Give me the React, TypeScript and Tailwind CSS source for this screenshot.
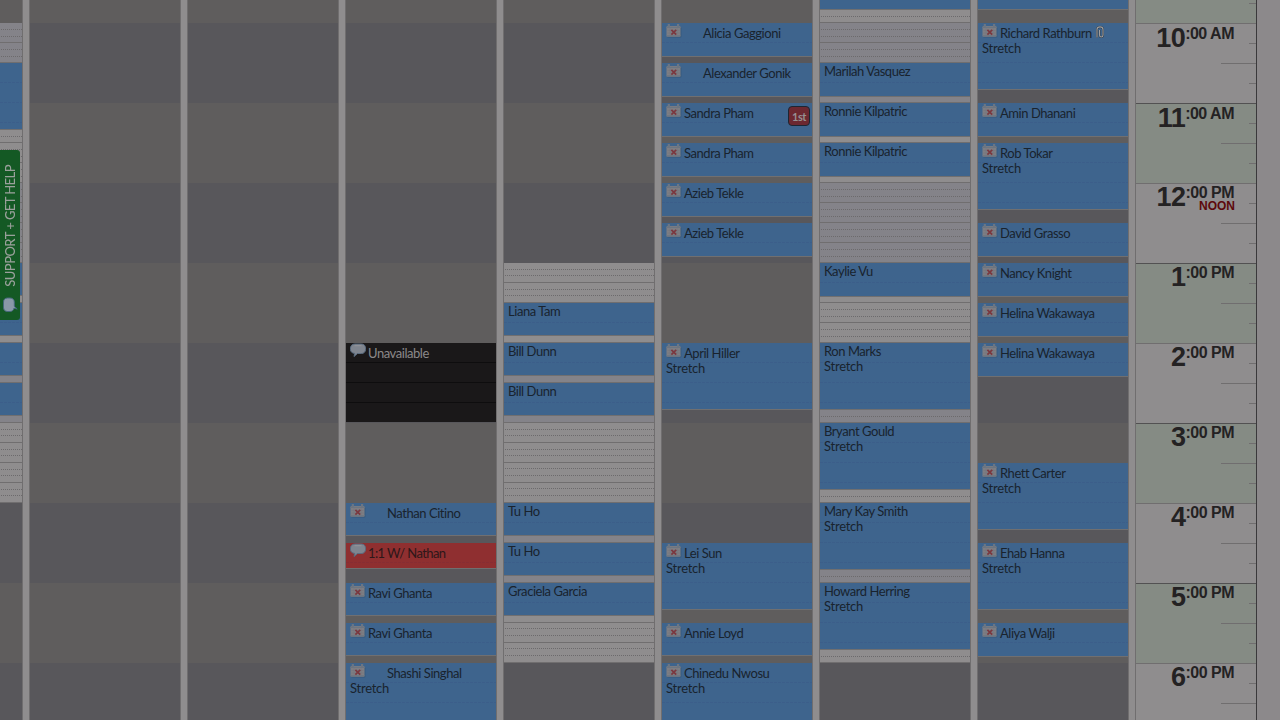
import React from 'react';

type Icon = 'cal' | 'chat';
type Item = {
  kind: 'event' | 'gap' | 'row' | 'busy' | 'red';
  h: number;
  name?: string;
  icon?: Icon;
  indent?: boolean;
  stretch?: boolean;
  badge?: boolean;
  clip?: boolean;
  solid?: boolean;
};

const ev = (h: number, name?: string, extra: Partial<Item> = {}): Item => ({ kind: 'event', h, name, ...extra });
const cal = (h: number, name: string, extra: Partial<Item> = {}): Item => ev(h, name, { icon: 'cal', ...extra });
const gap = (h: number): Item => ({ kind: 'gap', h });
const dot = (h: number): Item => ({ kind: 'row', h });
const line = (h: number): Item => ({ kind: 'row', h, solid: true });
const slotA = () => [dot(7), dot(6), line(7)];
const slotB = () => [dot(6), dot(7), line(7)];
const slotC = () => [dot(7), dot(7), line(6)];

const left: Item[] = [
  gap(23), ...slotC(), ...slotC(), ev(67),
  dot(7), line(6), ...slotC(), ...slotC(), ...slotC(), ...slotC(), ...slotC(), ...slotC(),
  ev(33), line(7), ev(33), line(7), ev(33), line(7), ev(33), line(7),
  ...slotA(), ...slotA(), ...slotA(), ...slotA(),
];

const columns: Item[][] = [
  [],
  [],
  [
    gap(343), { kind: 'busy', h: 79, name: 'Unavailable', icon: 'chat' }, gap(81),
    cal(33, 'Nathan Citino', { indent: true }), gap(7),
    { kind: 'red', h: 26, name: '1:1 W/ Nathan', icon: 'chat' }, gap(14),
    cal(33, 'Ravi Ghanta'), gap(7), cal(33, 'Ravi Ghanta'), gap(7),
    cal(67, 'Shashi Singhal', { indent: true, stretch: true }),
  ],
  [
    gap(263), ...slotA(), ...slotA(), ev(33, 'Liana Tam'), line(7),
    ev(33, 'Bill Dunn'), line(7), ev(33, 'Bill Dunn'), line(7),
    ...slotA(), ...slotA(), ...slotB(), ...slotB(),
    ev(33, 'Tu Ho'), line(7), ev(33, 'Tu Ho'), line(7), ev(33, 'Graciela Garcia'), line(7),
    ...slotB(), ...slotB(),
  ],
  [
    gap(23), cal(34, 'Alicia Gaggioni', { indent: true }), gap(6),
    cal(34, 'Alexander Gonik', { indent: true }), gap(6),
    cal(34, 'Sandra Pham', { badge: true }), gap(6), cal(34, 'Sandra Pham'), gap(6),
    cal(34, 'Azieb Tekle'), gap(6), cal(34, 'Azieb Tekle'), gap(86),
    cal(67, 'April Hiller', { stretch: true }), gap(133),
    cal(67, 'Lei Sun', { stretch: true }), gap(13), cal(33, 'Annie Loyd'), gap(7),
    cal(67, 'Chinedu Nwosu', { stretch: true }),
  ],
  [
    ev(10), dot(7), line(6), ...slotC(), ...slotC(),
    ev(34, 'Marilah Vasquez'), line(6), ev(34, 'Ronnie Kilpatric'), line(6), ev(34, 'Ronnie Kilpatric'), line(6),
    ...slotC(), ...slotC(), ...slotC(), ...slotC(),
    ev(34, 'Kaylie Vu'), line(6), ...slotC(), ...slotC(),
    ev(67, 'Ron Marks', { stretch: true }), dot(7), line(6),
    ev(67, 'Bryant Gould', { stretch: true }), dot(7), line(6),
    ev(67, 'Mary Kay Smith', { stretch: true }), dot(7), line(6),
    ev(67, 'Howard Herring', { stretch: true }), dot(7), line(6),
  ],
  [
    ev(10), gap(13), cal(67, 'Richard Rathburn', { stretch: true, clip: true }), gap(13),
    cal(34, 'Amin Dhanani'), gap(6), cal(67, 'Rob Tokar', { stretch: true }), gap(13),
    cal(34, 'David Grasso'), gap(6), cal(34, 'Nancy Knight'), gap(6),
    cal(34, 'Helina Wakawaya'), gap(6), cal(34, 'Helina Wakawaya'), gap(86),
    cal(67, 'Rhett Carter', { stretch: true }), gap(13), cal(67, 'Ehab Hanna', { stretch: true }), gap(13),
    cal(34, 'Aliya Walji'),
  ],
];

function CalendarIcon() {
  return (
    <svg className="block" width="17" height="16" viewBox="0 0 17 16">
      <rect x="1" y="4" width="14.500" height="10.800" rx="1.500" fill="#35587c" opacity=".7" />
      <rect x=".5" y="3" width="14" height="10.700" rx="1.200" fill="#7e7e83" />
      <path d="M.5 3.800h14v1.200H.5zM.5 12.300h14v1.200H.5z" fill="#6c7581" />
      <path d="M1.500 7.500h12M1.500 10h12M4 5.500v6M11 5.500v6" stroke="#757780" strokeWidth=".7" />
      <rect x="1.700" y="1" width="2.200" height="3.200" fill="#6c7683" />
      <rect x="11" y="1" width="2.200" height="3.200" fill="#6c7683" />
      <path d="M5.400 6.900l4.800 4.800M10.200 6.900l-4.800 4.800" stroke="#7b383f" strokeWidth="1.700" />
    </svg>
  );
}

function ChatIcon() {
  return (
    <svg className="block" width="17" height="16" viewBox="0 0 17 16">
      <path
        d="M5 1h6.500c2.400 0 4 1.700 4 4v1.500c0 2.300-1.600 4-4 4H7.500L4 13.500l.7-3.100C2.100 10.200.5 8.700.5 6.500V5C.5 2.700 2.400 1 5 1z"
        fill="#7f858f" stroke="#5a6c80"
      />
      <path d="M4.500 2.700h7" stroke="#949499" />
    </svg>
  );
}

function Clip() {
  return (
    <svg className="ml-1 shrink-0" width="8" height="13" viewBox="0 0 8 13" fill="none">
      <path d="M1 11.500V3.500C1 0 7 0 7 3.500V9c0 2.600-3.500 2.600-3.500 0V4" stroke="#2b3947" strokeWidth="2" />
      <path d="M1 11.500V3.500C1 0 7 0 7 3.500V9c0 2.600-3.500 2.600-3.500 0V4" stroke="#a09e9e" strokeWidth="1.100" />
    </svg>
  );
}

const fills: Record<string, string> = {
  event: 'bg-[#3e648d] text-[#19232e] border-b border-[#706f70]',
  busy: 'bg-[#1a1819] text-[#8b898a]',
  red: 'bg-[#8f2f30] text-[#2d1719] border-b border-[#706f70]',
};

function Block({ item }: { item: Item }) {
  const dark = item.kind === 'busy';
  return (
    <div className={`relative shrink-0 overflow-hidden ${fills[item.kind]}`} style={{ height: item.h }}>
      <div
        className={
          dark
            ? 'absolute inset-0 bg-[repeating-linear-gradient(to_bottom,transparent_0_19px,#0e0d0e_19px_20px)]'
            : 'absolute inset-0 bg-[repeating-linear-gradient(to_bottom,transparent_0_19px,#2a206012_19px_20px)] [mask-image:repeating-linear-gradient(to_right,#000_0_3px,transparent_3px_4px)]'
        }
      />
      <div className={`relative pl-1 ${item.icon ? 'pt-[3px]' : 'pt-px'}`}>
        <div className="flex h-[15px] items-start">
          {item.icon && (
            <span className={`-mt-[3px] shrink-0 ${item.indent ? 'w-[37px]' : 'w-[18px]'}`}>
              {item.icon === 'cal' ? <CalendarIcon /> : <ChatIcon />}
            </span>
          )}
          {item.name && <span className={`whitespace-nowrap ${item.kind === 'red' ? 'tracking-[-0.600px]' : 'tracking-[-0.450px]'}`}>{item.name}</span>}
          {item.clip && <Clip />}
        </div>
        {item.stretch && <div className="tracking-[-0.250px]">Stretch</div>}
      </div>
      {item.badge && (
        <span className="absolute top-[3px] right-[2px] flex h-[20px] w-[22px] items-center justify-center rounded-[4px] border border-[#1d2632] bg-[#6c2830] text-[11px] font-bold tracking-[-0.400px] text-[#979092]">
          1st
        </span>
      )}
    </div>
  );
}

function Column({ items, className }: { items: Item[]; className: string }) {
  let y = 0;
  return (
    <div
      className={`flex h-[720px] shrink-0 flex-col overflow-hidden border-[#706e6f] bg-[repeating-linear-gradient(to_bottom,#5f5d5d_0_23px,#58575b_23px_103px,#5f5d5d_103px_160px)] ${className}`}
    >
      {items.map((item, i) => {
        const top = y;
        y += item.h;
        if (item.kind === 'gap') return <div key={i} className="shrink-0" style={{ height: item.h }} />;
        if (item.kind === 'row') {
          const shaded = (top + 137) % 160 < 80;
          return (
            <div
              key={i}
              className={`flex shrink-0 flex-col justify-end ${shaded ? 'bg-[#848389]' : 'bg-[#8f8d8e]'}`}
              style={{ height: item.h }}
            >
              <div
                className={
                  item.solid
                    ? 'h-px bg-[#706e6f]'
                    : 'h-px bg-[repeating-linear-gradient(to_right,transparent_0_1px,#6c6a6c_1px_2px)]'
                }
              />
            </div>
          );
        }
        return <Block key={i} item={item} />;
      })}
    </div>
  );
}

const hours = [
  { n: '10', m: 'AM' }, { n: '11', m: 'AM' }, { n: '12', m: 'PM', noon: true }, { n: '1', m: 'PM' },
  { n: '2', m: 'PM' }, { n: '3', m: 'PM' }, { n: '4', m: 'PM' }, { n: '5', m: 'PM' }, { n: '6', m: 'PM' },
];

function Ticks() {
  return (
    <div className="flex w-[35px] flex-col items-end pt-[19px]">
      <div className="h-px w-[7px] bg-[#706e6f]" />
      <div className="mt-[19px] h-px w-[35px] bg-[#706e6f]" />
      <div className="mt-[19px] h-px w-[7px] bg-[#706e6f]" />
    </div>
  );
}

function TimeAxis() {
  return (
    <div className="ml-[6px] flex h-[720px] w-[122px] shrink-0 flex-col overflow-hidden border-r border-l border-r-[#3a393b] border-l-[#706e6f] bg-[#8f8d8e] font-['Liberation_Sans',sans-serif] font-bold">
      <div className="flex h-[23px] shrink-0 flex-col items-end bg-[#858b84] pt-[3px]">
        <div className="h-px w-[7px] bg-[#706e6f]" />
      </div>
      {hours.map((hr, i) => (
        <div
          key={i}
          className={`flex h-[80px] shrink-0 justify-end border-t ${i % 2 ? 'border-[#525152] bg-[#858b84]' : 'border-[#706e6f]'}`}
        >
          <div className={`-mr-[13px] flex flex-col items-end text-[#242223] ${hr.m === 'AM' ? 'pt-px' : ''}`}>
            <div className="flex h-[25px] items-start">
              <span className="text-[27px] leading-[27px] tracking-[-0.600px]">{hr.n}</span>
              <span className="text-[16px] leading-[18px] tracking-[-0.500px] whitespace-pre">:00 {hr.m}</span>
            </div>
            {hr.noon && <span className="-mt-[9px] -mr-px text-[12px] leading-[13px] text-[#5d080b]">NOON</span>}
          </div>
          <Ticks />
        </div>
      ))}
    </div>
  );
}

export default function App() {
  return (
    <div className="relative flex h-[720px] w-[1280px] overflow-hidden bg-[#8f8d8e] font-['Lato',sans-serif] text-[13px] leading-[15px]">
      <Column items={left} className="w-[23px] border-r" />
      {columns.map((items, i) => (
        <Column key={i} items={items} className="ml-[6px] w-[152px] border-x" />
      ))}
      <TimeAxis />
      <div className="h-full flex-1 bg-[#8c898b]" />
      <div className="absolute top-[150px] left-0 flex h-[170px] w-[20px] flex-col items-center justify-between rounded-r-[3px] bg-[#145924] pt-[15px] pb-[7px]">
        <span className="rotate-180 text-[13px] leading-[20px] font-medium tracking-[-0.560px] whitespace-nowrap text-[#9aa09b] [writing-mode:vertical-rl]">
          SUPPORT + GET HELP
        </span>
        <svg width="16" height="16" viewBox="0 0 16 16">
          <path
            d="M5.500 1h2.500c2.600 0 4.300 1.600 4.300 4v4.300l2.900 2.700-3.200-.8c-.6 2.200-2 3.300-4 3.300H5.500c-2.500 0-4-1.600-4-4V5c0-2.400 1.500-4 4-4z"
            fill="#8a98a8" stroke="#46687c"
          />
        </svg>
      </div>
    </div>
  );
}
